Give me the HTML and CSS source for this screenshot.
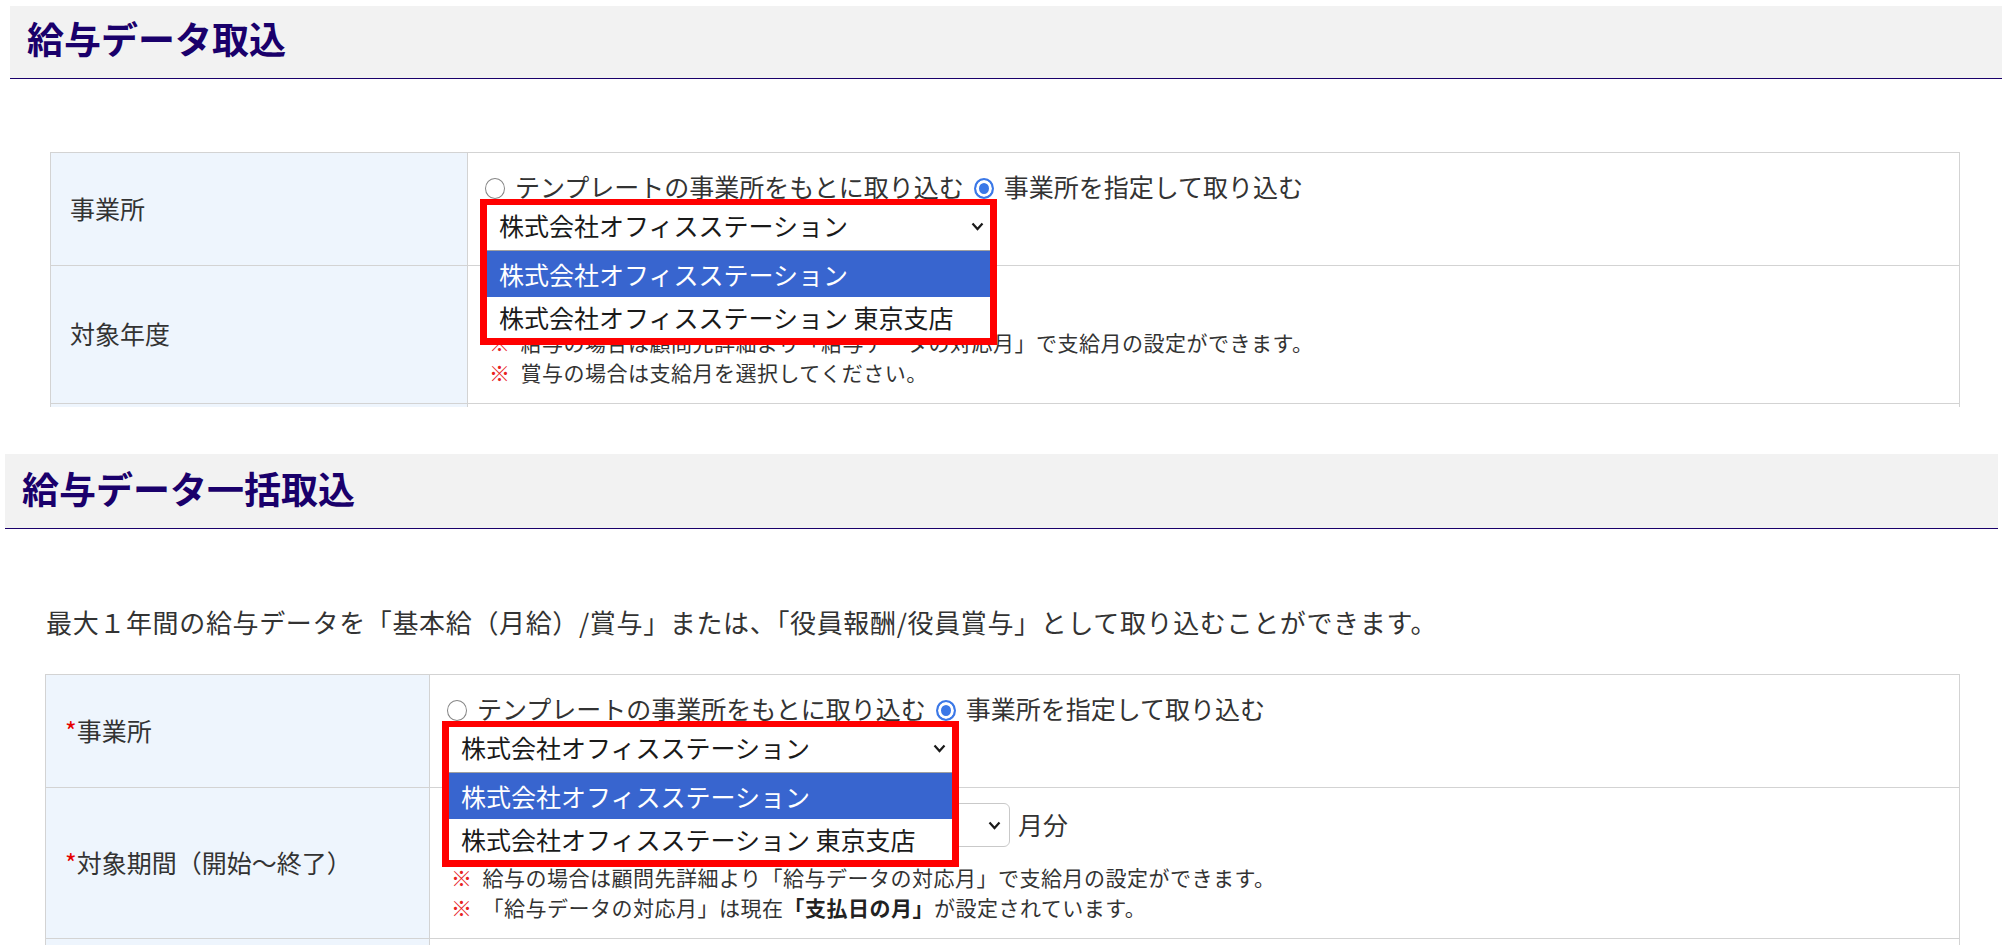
FILE: index.html
```html
<!DOCTYPE html>
<html lang="ja">
<head>
  <meta charset="UTF-8">
  <meta name="viewport" content="width=device-width, initial-scale=1.0">
  <title>給与データ取込</title>
  <link rel="stylesheet" href="styles.css">
</head>
<body>

  <!-- 給与データ取込 -->
  <section class="panel panel_first">
    <h2 class="panel__title">給与データ取込</h2>

    <div class="panel__clip">
      <table class="form-table form-table_first">
        <tr>
          <th>事業所</th>
          <td>
            <div class="choice">
              <label class="choice__item"><span class="radio"></span>テンプレートの事業所をもとに取り込む</label>
              <label class="choice__item"><span class="radio radio_checked"></span>事業所を指定して取り込む</label>
            </div>
            <div class="picker">
              <div class="picker__popup">
                <div class="picker__select">
                  <span>株式会社オフィスステーション</span>
                  <svg class="chevron" width="13" height="9" viewBox="0 0 13 9"><path d="M1.5 1.5l5 5.5 5-5.5" fill="none" stroke="#1a1a1a" stroke-width="2.2"/></svg>
                </div>
                <ul class="picker__list">
                  <li class="picker__option picker__option_active">株式会社オフィスステーション</li>
                  <li class="picker__option">株式会社オフィスステーション 東京支店</li>
                </ul>
              </div>
            </div>
          </td>
        </tr>
        <tr>
          <th>対象年度</th>
          <td>
            <div class="period period_year">
              <div class="select-box select-box_year">
                <span>2023</span>
                <svg class="chevron" width="13" height="9" viewBox="0 0 13 9"><path d="M1.5 1.5l5 5.5 5-5.5" fill="none" stroke="#1a1a1a" stroke-width="2.2"/></svg>
              </div>
              <span>年度</span>
            </div>
            <p class="note"><span class="note__mark">※</span>給与の場合は顧問先詳細より「給与データの対応月」で支給月の設定ができます。</p>
            <p class="note"><span class="note__mark">※</span>賞与の場合は支給月を選択してください。</p>
          </td>
        </tr>
        <tr>
          <th>取込区分</th>
          <td>基本給（月給）</td>
        </tr>
      </table>
    </div>
  </section>

  <!-- 給与データ一括取込 -->
  <section class="panel panel_second">
    <h2 class="panel__title">給与データ一括取込</h2>

    <p class="panel__lead">最大１年間の給与データを「基本給（月給）/賞与」または、「役員報酬/役員賞与」として取り込むことができます。</p>

    <table class="form-table form-table_second">
      <tr>
        <th><span class="required">*</span>事業所</th>
        <td>
          <div class="choice">
            <label class="choice__item"><span class="radio"></span>テンプレートの事業所をもとに取り込む</label>
            <label class="choice__item"><span class="radio radio_checked"></span>事業所を指定して取り込む</label>
          </div>
          <div class="picker">
            <div class="picker__popup">
              <div class="picker__select">
                <span>株式会社オフィスステーション</span>
                <svg class="chevron" width="13" height="9" viewBox="0 0 13 9"><path d="M1.5 1.5l5 5.5 5-5.5" fill="none" stroke="#1a1a1a" stroke-width="2.2"/></svg>
              </div>
              <ul class="picker__list">
                <li class="picker__option picker__option_active">株式会社オフィスステーション</li>
                <li class="picker__option">株式会社オフィスステーション 東京支店</li>
              </ul>
            </div>
          </div>
        </td>
      </tr>
      <tr>
        <th><span class="required">*</span>対象期間（開始～終了）</th>
        <td>
          <div class="period period_range">
            <div class="select-box select-box_year">
              <span>2023</span>
              <svg class="chevron" width="13" height="9" viewBox="0 0 13 9"><path d="M1.5 1.5l5 5.5 5-5.5" fill="none" stroke="#1a1a1a" stroke-width="2.2"/></svg>
            </div>
            <span>年</span>
            <div class="select-box select-box_month">
              <span>1</span>
              <svg class="chevron" width="13" height="9" viewBox="0 0 13 9"><path d="M1.5 1.5l5 5.5 5-5.5" fill="none" stroke="#1a1a1a" stroke-width="2.2"/></svg>
            </div>
            <span>月分</span>
            <span>～</span>
            <div class="select-box select-box_year">
              <span>2023</span>
              <svg class="chevron" width="13" height="9" viewBox="0 0 13 9"><path d="M1.5 1.5l5 5.5 5-5.5" fill="none" stroke="#1a1a1a" stroke-width="2.2"/></svg>
            </div>
            <span>年</span>
            <div class="select-box select-box_month">
              <span>3</span>
              <svg class="chevron" width="13" height="9" viewBox="0 0 13 9"><path d="M1.5 1.5l5 5.5 5-5.5" fill="none" stroke="#1a1a1a" stroke-width="2.2"/></svg>
            </div>
            <span>月分</span>
          </div>
          <p class="note"><span class="note__mark">※</span>給与の場合は顧問先詳細より「給与データの対応月」で支給月の設定ができます。</p>
          <p class="note"><span class="note__mark">※</span>「給与データの対応月」は現在<b>「支払日の月」</b>が設定されています。</p>
        </td>
      </tr>
      <tr>
        <th><span class="required">*</span>取込区分</th>
        <td>基本給（月給）/賞与</td>
      </tr>
    </table>
  </section>

</body>
</html>
```

FILE: styles.css
```css
*, *:after, *:before {
  box-sizing: border-box;
}

html, body {
  margin: 0;
  background-color: #fff;
  color: #333;
  font-family: "Noto Sans CJK JP", "Noto Sans", sans-serif;
}

.panel_first {
  margin: 6px 3px 0 10px;
}

.panel_second {
  margin: 47px 7px 0 5px;
}

.panel__title {
  margin: 0;
  padding: 0 0 8px 17px;
  height: 73px;
  background-color: #f2f2f2;
  border-bottom: 1px solid #1a006b;
  color: #1a006b;
  font-size: 37px;
  font-weight: 700;
  line-height: 64px;
}

.panel_second .panel__title {
  height: 75px;
  padding-bottom: 6px;
  line-height: 68px;
}

.panel__clip {
  height: 255px;
  margin-top: 73px;
  overflow: hidden;
}

.panel__lead {
  margin: 73px 0 32px;
  padding-left: 41px;
  font-size: 26px;
  line-height: 40px;
  letter-spacing: 0.65px;
}

/* form table */

.form-table {
  margin-left: 40px;
  border-collapse: collapse;
  font-size: 25px;
  line-height: 1.5;
}

.form-table_first {
  width: 1910px;
}

.form-table_second {
  width: 1915px;
}

.form-table th,
.form-table td {
  padding: 15px 17px 16px;
  border: 1px solid #d3d3d3;
  text-align: left;
  vertical-align: middle;
}

.form-table th {
  padding-left: 19px;
  background-color: #eef5fd;
  font-weight: 400;
}

.form-table_first th {
  width: 417px;
}

.form-table_second th {
  width: 384px;
}

.required {
  color: #e60000;
}

.choice {
  display: flex;
  align-items: center;
  height: 38px;
}

.choice__item {
  display: flex;
  align-items: center;
  margin-right: 10px;
  white-space: nowrap;
}

.radio {
  flex-shrink: 0;
  width: 20px;
  height: 21px;
  margin: 2px 10px 0 0;
  border: 1.5px solid #858585;
  border-radius: 50%;
  background-color: #fff;
}

.radio_checked {
  border: 2px solid #3b78e7;
  background-color: #3b78e7;
  box-shadow: inset 0 0 0 3px #fff;
}

/* opened dropdown */

.picker {
  position: relative;
  width: 503px;
  height: 43px;
  margin-left: 2px;
}

.picker__popup {
  position: absolute;
  top: -7px;
  left: -7px;
  z-index: 2;
  width: 517px;
  border: 7px solid #ff0000;
  border-top-width: 6px;
  background-color: #fff;
  color: #1a1a1a;
}

.picker__select {
  display: flex;
  align-items: center;
  justify-content: space-between;
  height: 46px;
  padding: 0 6px 3px 12px;
  border-bottom: 1px solid #a0a0a0;
}

.picker__list {
  margin: 0;
  padding: 0;
  list-style: none;
}

.picker__option {
  height: 44px;
  padding-left: 12px;
  line-height: 44px;
  white-space: nowrap;
}

.picker__option_active {
  height: 46px;
  background-color: #3865cf;
  color: #fff;
  line-height: 46px;
}

.picker__option:last-child {
  height: 41px;
  line-height: 41px;
}

.chevron {
  flex-shrink: 0;
}

/* period selects */

.period {
  display: flex;
  align-items: center;
  gap: 8px;
  white-space: nowrap;
}

.period_year {
  margin-bottom: 2px;
}

.period_range {
  margin-bottom: 15px;
}

.select-box {
  display: inline-flex;
  align-items: center;
  justify-content: space-between;
  height: 44px;
  padding: 0 8px 0 10px;
  background-color: #fff;
  border: 1px solid #c9c9c9;
  border-radius: 6px;
  color: #1a1a1a;
}

.select-box_year {
  width: 116px;
}

.select-box_month {
  width: 75px;
}

.note {
  margin: 0;
  padding-left: 4px;
  font-size: 21px;
  line-height: 30px;
  letter-spacing: 0.5px;
  white-space: nowrap;
}

.note__mark {
  margin-right: 10px;
  color: #e8231f;
  font-weight: 700;
}

.note b {
  color: #222;
}
```
